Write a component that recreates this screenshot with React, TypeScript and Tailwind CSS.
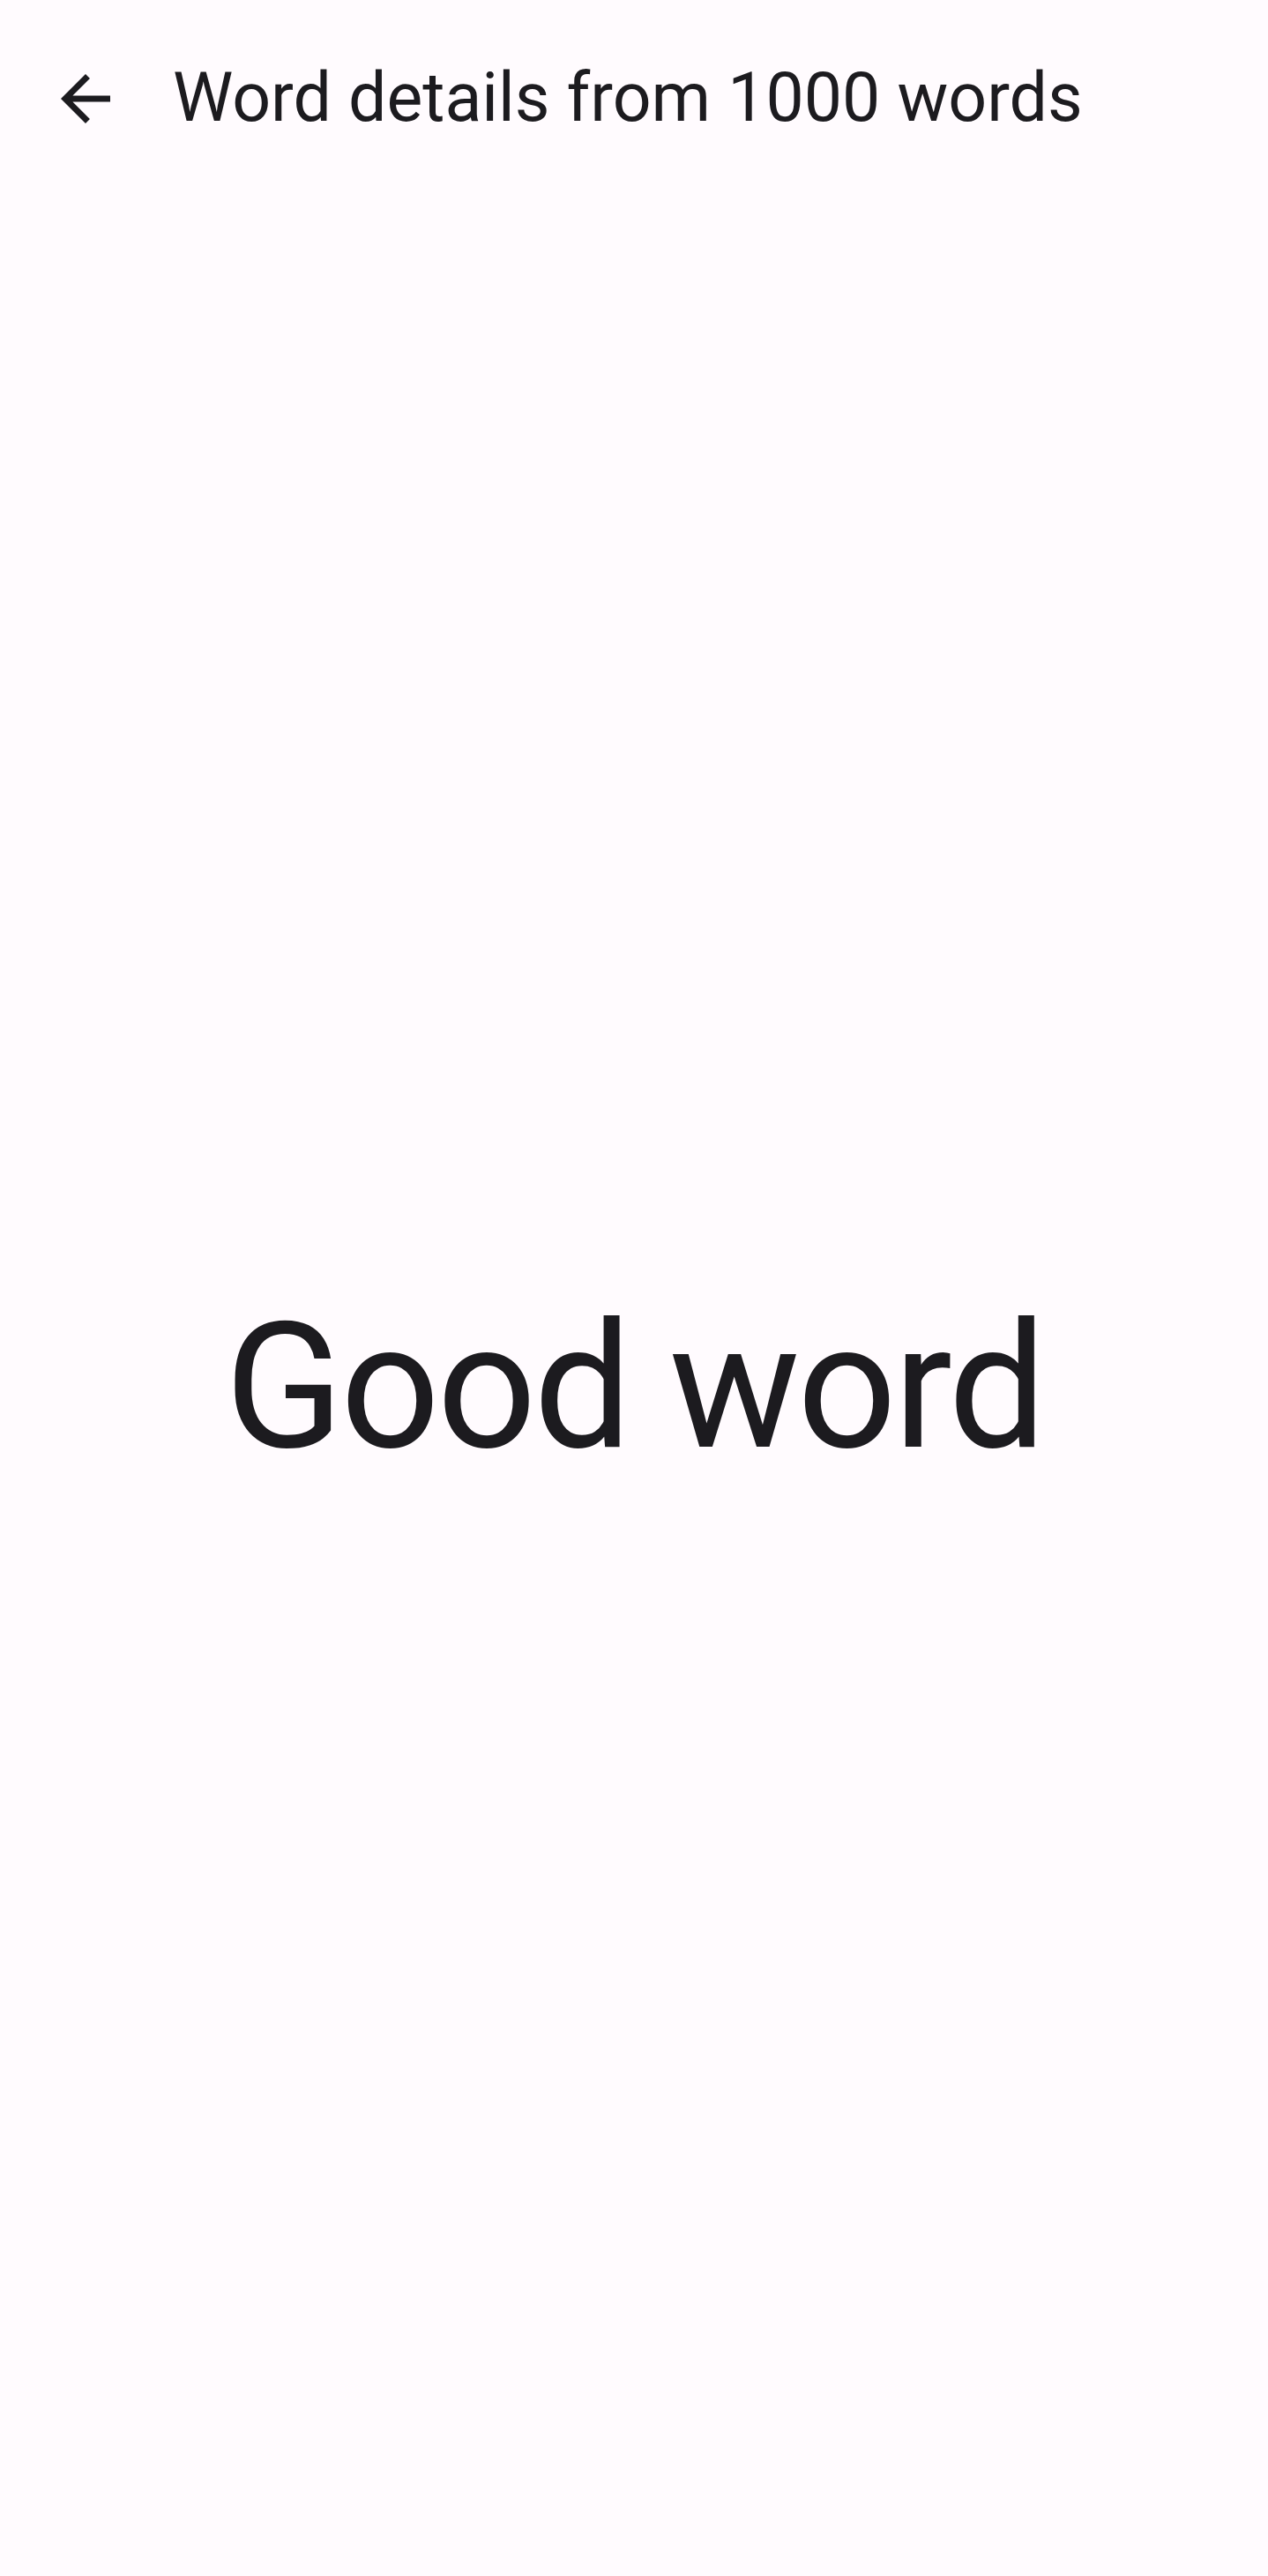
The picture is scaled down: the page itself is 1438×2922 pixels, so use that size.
import React from "react";

export default function App() {
  return (
    <div className="flex h-[2922px] w-[1438px] flex-col bg-[#fffbfe] text-[#1c1b1f]" style={{ fontFamily: "Roboto, 'Liberation Sans', sans-serif" }}>
      <header className="flex h-[224px] shrink-0 items-center">
        <div className="ml-[55px] flex h-[84px] w-[84px] items-center justify-center">
          <svg viewBox="0 0 24 24" className="h-[84px] w-[84px]" fill="#1c1b1f">
            <path d="M20 11H7.83l5.59-5.59L12 4l-8 8 8 8 1.41-1.41L7.83 13H20v-2z" />
          </svg>
        </div>
        <h1 className="ml-[57px] text-[77px] font-normal leading-normal">Word details from 1000 words</h1>
      </header>
      <main className="flex flex-1 items-center justify-center">
        <p className="text-[198px] font-normal leading-normal tracking-[-3.5px]">Good word</p>
      </main>
    </div>
  );
}
